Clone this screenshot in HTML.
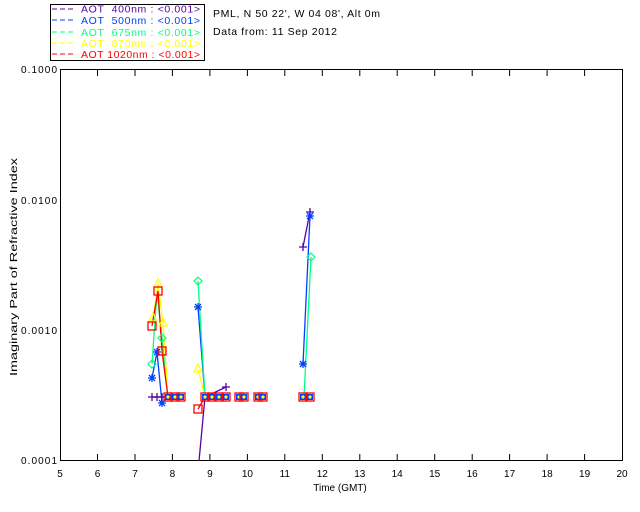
<!DOCTYPE html>
<html><head><meta charset="utf-8"><style>
html,body{margin:0;padding:0;background:#fff;}
svg{display:block;font-family:"Liberation Sans","DejaVu Sans",sans-serif;}
</style></head><body>
<svg width="640" height="512" viewBox="0 0 640 512" xmlns="http://www.w3.org/2000/svg">
<defs>
<path id="pl" d="M-4 0H4M0-4V4" fill="none" stroke-width="1.3"/>
<path id="as" d="M-4 0H4M0-4V4M-3-3L3 3M-3 3L3-3" fill="none" stroke-width="1.3"/>
<path id="di" d="M0-4L4 0 0 4-4 0Z" fill="none" stroke-width="1.2"/>
<path id="tr" d="M0-5L4 3H-4Z" fill="none" stroke-width="1.2"/>
<rect id="sq" x="-4" y="-4" width="8" height="8" fill="none" stroke-width="1.3"/>
<g id="bm"><rect x="-3" y="-3" width="6" height="6" fill="#0040ff"/><circle r="1.6" fill="#ffff00"/><rect x="-4" y="-4" width="8" height="8" fill="none" stroke="#f00" stroke-width="1.3"/></g>
</defs>
<rect x="50.5" y="4.5" width="154" height="56" fill="#fff" stroke="#000"/>
<g font-size="10.5" lengthAdjust="spacingAndGlyphs">
<line x1="52" y1="9" x2="75" y2="9" stroke="#5a00a0" stroke-dasharray="5,3"/>
<text x="81" y="12.5" fill="#5a00a0" textLength="119">AOT&#160;&#160;400nm : &lt;0.001&gt;</text>
<line x1="52" y1="20" x2="75" y2="20" stroke="#0040ff" stroke-dasharray="5,3"/>
<text x="81" y="24" fill="#0040ff" textLength="119">AOT&#160;&#160;500nm : &lt;0.001&gt;</text>
<line x1="52" y1="32" x2="75" y2="32" stroke="#00ff80" stroke-dasharray="5,3"/>
<text x="81" y="36" fill="#00ff80" textLength="119">AOT&#160;&#160;675nm : &lt;0.001&gt;</text>
<line x1="52" y1="43" x2="75" y2="43" stroke="#ffff00" stroke-dasharray="5,3"/>
<text x="81" y="47" fill="#ffff00" textLength="119">AOT&#160;&#160;870nm : &lt;0.001&gt;</text>
<line x1="52" y1="54" x2="75" y2="54" stroke="#ff0000" stroke-dasharray="5,3"/>
<text x="81" y="58" fill="#ff0000" textLength="119">AOT 1020nm : &lt;0.001&gt;</text>
<text x="213" y="17" fill="#000" textLength="167">PML, N 50 22', W 04 08', Alt 0m</text>
<text x="213" y="35" fill="#000" textLength="124">Data from: 11 Sep 2012</text>
</g>
<rect x="60.5" y="69.5" width="562" height="391" fill="none" stroke="#000"/>
<g stroke="#000">
<path d="M97.5 460V454M135 460V454M172.4 460V454M209.9 460V454M247.4 460V454M284.8 460V454M322.3 460V454M359.8 460V454M397.2 460V454M434.7 460V454M472.2 460V454M509.6 460V454M547.1 460V454M584.6 460V454"/>
<path d="M97.5 70V76M135 70V76M172.4 70V76M209.9 70V76M247.4 70V76M284.8 70V76M322.3 70V76M359.8 70V76M397.2 70V76M434.7 70V76M472.2 70V76M509.6 70V76M547.1 70V76M584.6 70V76"/>
</g>
<g font-size="10" fill="#000" lengthAdjust="spacingAndGlyphs">
<text x="21" y="73" textLength="36">0.1000</text>
<text x="21" y="204" textLength="36">0.0100</text>
<text x="21" y="334" textLength="36">0.0010</text>
<text x="21" y="464" textLength="36">0.0001</text>
</g>
<g font-size="10" text-anchor="middle" fill="#000">
<text x="60" y="477">5</text><text x="97.5" y="477">6</text><text x="135" y="477">7</text><text x="172.4" y="477">8</text><text x="209.9" y="477">9</text><text x="247.4" y="477">10</text><text x="284.8" y="477">11</text><text x="322.3" y="477">12</text><text x="359.8" y="477">13</text><text x="397.2" y="477">14</text><text x="434.7" y="477">15</text><text x="472.2" y="477">16</text><text x="509.6" y="477">17</text><text x="547.1" y="477">18</text><text x="584.6" y="477">19</text><text x="622" y="477">20</text>
<text x="340" y="491">Time (GMT)</text>
</g>
<text transform="translate(17,376) rotate(-90)" font-size="10" fill="#000" textLength="218" lengthAdjust="spacingAndGlyphs">Imaginary Part of Refractive Index</text>
<g fill="none" stroke-width="1.3">
<polyline stroke="#5a00a0" points="152,397 157,397 162,397 168,397"/>
<polyline stroke="#5a00a0" points="199,461 205,397 226,387"/>
<polyline stroke="#5a00a0" points="303,247 310,212"/>
<polyline stroke="#0040ff" points="152,378 157,352 162,403 168,397"/>
<polyline stroke="#0040ff" points="198,307 205,397"/>
<polyline stroke="#0040ff" points="303,364 310,216"/>
<polyline stroke="#00ff80" points="152,364 157,292 162,338 168,397"/>
<polyline stroke="#00ff80" points="198,281 205,397"/>
<polyline stroke="#00ff80" points="304,397 311,257"/>
<polyline stroke="#ffff00" points="153,318 158,284 163,323 168,397"/>
<polyline stroke="#ffff00" points="198,369 205,397"/>
<polyline stroke="#ff0000" points="152,326 158,291 162,351 168,397 181,397"/>
<polyline stroke="#ff0000" points="198,409 205,397 226,397"/>
<polyline stroke="#ff0000" points="239,397 244,397"/>
<polyline stroke="#ff0000" points="258,397 263,397"/>
<polyline stroke="#ff0000" points="303,397 310,397"/>
</g>
<g stroke="#5a00a0"><use href="#pl" x="152" y="397"/><use href="#pl" x="157" y="397"/><use href="#pl" x="162" y="397"/><use href="#pl" x="226" y="387"/><use href="#pl" x="303" y="247"/><use href="#pl" x="310" y="212"/></g>
<g stroke="#0040ff"><use href="#as" x="152" y="378"/><use href="#as" x="157" y="352"/><use href="#as" x="162" y="403"/><use href="#as" x="198" y="307"/><use href="#as" x="303" y="364"/><use href="#as" x="310" y="216"/></g>
<g stroke="#00ff80"><use href="#di" x="152" y="364"/><use href="#di" x="162" y="338"/><use href="#di" x="198" y="281"/><use href="#di" x="311" y="257"/></g>
<g stroke="#ffff00"><use href="#tr" x="158" y="284"/><use href="#tr" x="153" y="318"/><use href="#tr" x="163" y="323"/><use href="#tr" x="198" y="369"/></g>
<g stroke="#ff0000"><use href="#sq" x="158" y="291"/><use href="#sq" x="152" y="326"/><use href="#sq" x="162" y="351"/><use href="#sq" x="198" y="409"/></g>
<use href="#bm" x="168" y="397"/><use href="#bm" x="175" y="397"/><use href="#bm" x="181" y="397"/>
<use href="#bm" x="205" y="397"/><use href="#bm" x="212" y="397"/><use href="#bm" x="219" y="397"/><use href="#bm" x="226" y="397"/>
<use href="#bm" x="239" y="397"/><use href="#bm" x="244" y="397"/><use href="#bm" x="258" y="397"/><use href="#bm" x="263" y="397"/>
<use href="#bm" x="303" y="397"/><use href="#bm" x="310" y="397"/>
</svg>
</body></html>
